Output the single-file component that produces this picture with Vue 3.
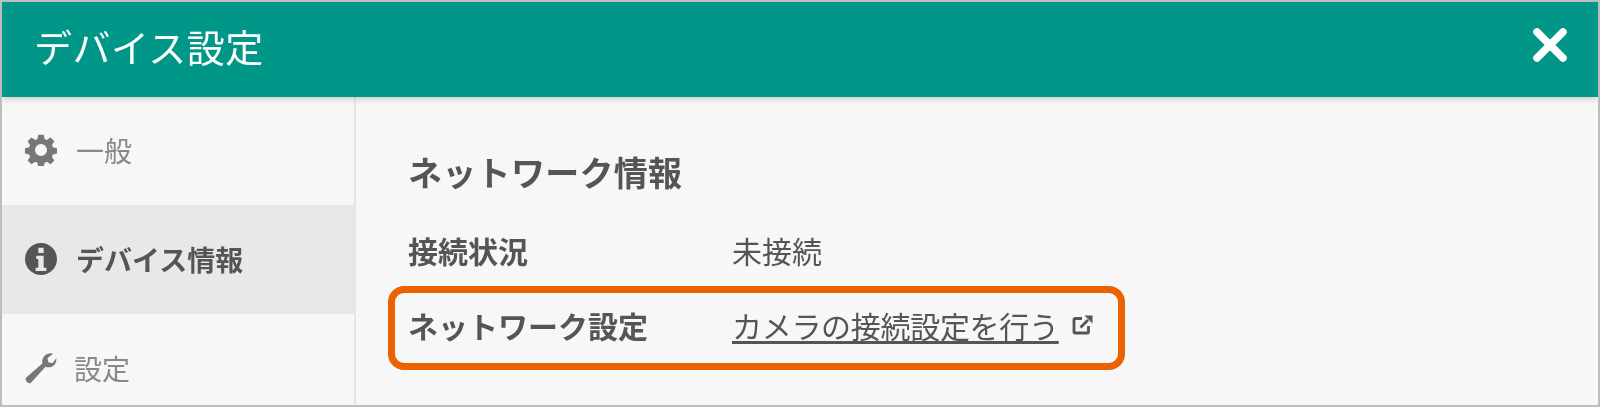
<script setup>
const items = [
  { label: '一般', icon: 'gear' },
  { label: 'デバイス情報', icon: 'info', active: true },
  { label: '設定', icon: 'wrench' }
]
</script>

<template>
  <div class="frame">
    <header class="header">
      <h1 class="title">デバイス設定</h1>
      <svg class="close" viewBox="0 0 36 36" aria-label="閉じる">
        <path d="M5 5 L31 31 M31 5 L5 31" stroke="#fff" stroke-width="7.5" stroke-linecap="round" fill="none" />
      </svg>
    </header>
    <div class="body">
      <nav class="side">
        <div v-for="item in items" :key="item.label" class="item" :class="{ active: item.active }">
          <svg v-if="item.icon === 'gear'" class="icon" viewBox="0 0 24 24">
            <path fill-rule="evenodd" d="M10 0.5h4l.7 3.3 1.600.7 2.900-1.800 2.800 2.800-1.800 2.900.7 1.600 3.100.7v4l-3.100.7-.7 1.600 1.800 2.900-2.800 2.800-2.900-1.800-1.600.7-.7 3.300h-4l-.7-3.300-1.600-.7-2.900 1.800-2.800-2.800 1.800-2.900-.7-1.600-3.100-.7v-4l3.100-.7.7-1.600-1.800-2.900 2.800-2.800 2.900 1.800 1.600-.7z M12 7.500a4.500 4.500 0 1 0 0 9a4.500 4.500 0 1 0 0-9z" />
          </svg>
          <svg v-else-if="item.icon === 'info'" class="icon" viewBox="0 0 24 24">
            <path fill-rule="evenodd" d="M12 0a12 12 0 1 0 0 24a12 12 0 1 0 0-24z M10 3.500h4v4h-4z M8.500 9.500h5.500v9h2v2.500h-8v-2.500h2v-6.500h-1.500z" />
          </svg>
          <svg v-else class="icon wrench" viewBox="0 0 24 24">
            <path d="M23.500 4.500c.5 3.500-2 7-5.800 7-.9 0-1.600-.2-2.300-.5L5 22.500a2.400 2.400 0 0 1-3.400.1l-.4-.4a2.400 2.400 0 0 1 .1-3.400L13 8.700c-.7-3.700 2-7.700 6.400-7.700.6 0 1.100.1 1.600.3l-4.200 3.400.7 3 3.100.7z" />
          </svg>
          <span class="label">{{ item.label }}</span>
        </div>
      </nav>
      <main class="main">
        <h2 class="heading">ネットワーク情報</h2>
        <div class="row">
          <span class="key">接続状況</span>
          <span class="value">未接続</span>
        </div>
        <div class="row link-row">
          <span class="key">ネットワーク設定</span>
          <span class="value"><a class="link">カメラの接続設定を行う</a>
            <svg class="ext" viewBox="0 0 22 22">
              <path d="M10 4.500H3.200a1.200 1.200 0 0 0-1.200 1.200v12.100a1.200 1.200 0 0 0 1.200 1.200h12.100a1.200 1.200 0 0 0 1.200-1.200V12" fill="none" stroke="#555" stroke-width="2.800" />
              <path d="M8.500 13.500 16 6" fill="none" stroke="#555" stroke-width="2.800" />
              <path d="M12.500 1.500h8v8z" fill="#555" />
            </svg>
          </span>
          <div class="callout"></div>
        </div>
      </main>
    </div>
  </div>
</template>

<style>
html, body { margin: 0; background: #f7f7f7; }
</style>

<style scoped>
.frame {
  box-sizing: border-box;
  width: 1600px;
  height: 407px;
  border: 2px solid #bdbdbd;
  background: #f7f7f7;
  overflow: hidden;
  display: flex;
  flex-direction: column;
  font-family: "Roboto", "Noto Sans CJK JP", sans-serif;
  color: #555;
}
.header {
  flex: none;
  height: 95px;
  box-sizing: border-box;
  background: #009688;
  display: flex;
  align-items: center;
  justify-content: space-between;
  padding: 0 30px 9px 32px;
  box-shadow: 0 2px 6px rgba(0, 0, 0, .18);
  position: relative;
  z-index: 1;
}
.title {
  margin: 0;
  font-size: 38px;
  font-weight: 400;
  letter-spacing: .5px;
  color: #fff;
}
.close { width: 36px; height: 36px; display: block; }
.title, .close, .icon, .label, .heading, .key, .value { filter: blur(.5px); }
.body { flex: 1; display: flex; min-height: 0; }
.side {
  flex: none;
  width: 352px;
  border-right: 2px solid #e6e6e6;
  display: flex;
  flex-direction: column;
}
.item {
  height: 109px;
  flex: none;
  display: flex;
  align-items: center;
  padding: 0 0 2px 23px;
  box-sizing: border-box;
  color: #888;
  font-size: 28px;
  fill: #777;
}
.item:first-child { height: 108px; }
.item.active {
  background: #e8e8e8;
  color: #555;
  font-weight: 700;
  fill: #555;
}
.icon { width: 32px; height: 32px; margin-right: 19px; flex: none; }
.wrench { margin-right: 17px; }
.main { flex: 1; padding: 54px 0 0 52px; min-width: 0; }
.heading {
  margin: 0 0 31px;
  font-size: 34px;
  line-height: 46px;
  font-weight: 700;
  letter-spacing: .3px;
}
.row {
  display: flex;
  align-items: center;
  font-size: 30px;
  height: 44px;
  margin-bottom: 31px;
  position: relative;
}
.key { width: 324px; flex: none; font-weight: 700; }
.value { display: inline-flex; align-items: center; white-space: nowrap; }
.link { text-decoration: underline; text-underline-offset: 3px; letter-spacing: -.3px; }
.ext { width: 22px; height: 22px; margin-left: 13px; margin-top: 0; }
.callout {
  position: absolute;
  left: -20px;
  top: -17px;
  width: 737px;
  height: 84px;
  box-sizing: border-box;
  border: 7px solid #ec6100;
  border-radius: 16px;
  pointer-events: none;
}
</style>
